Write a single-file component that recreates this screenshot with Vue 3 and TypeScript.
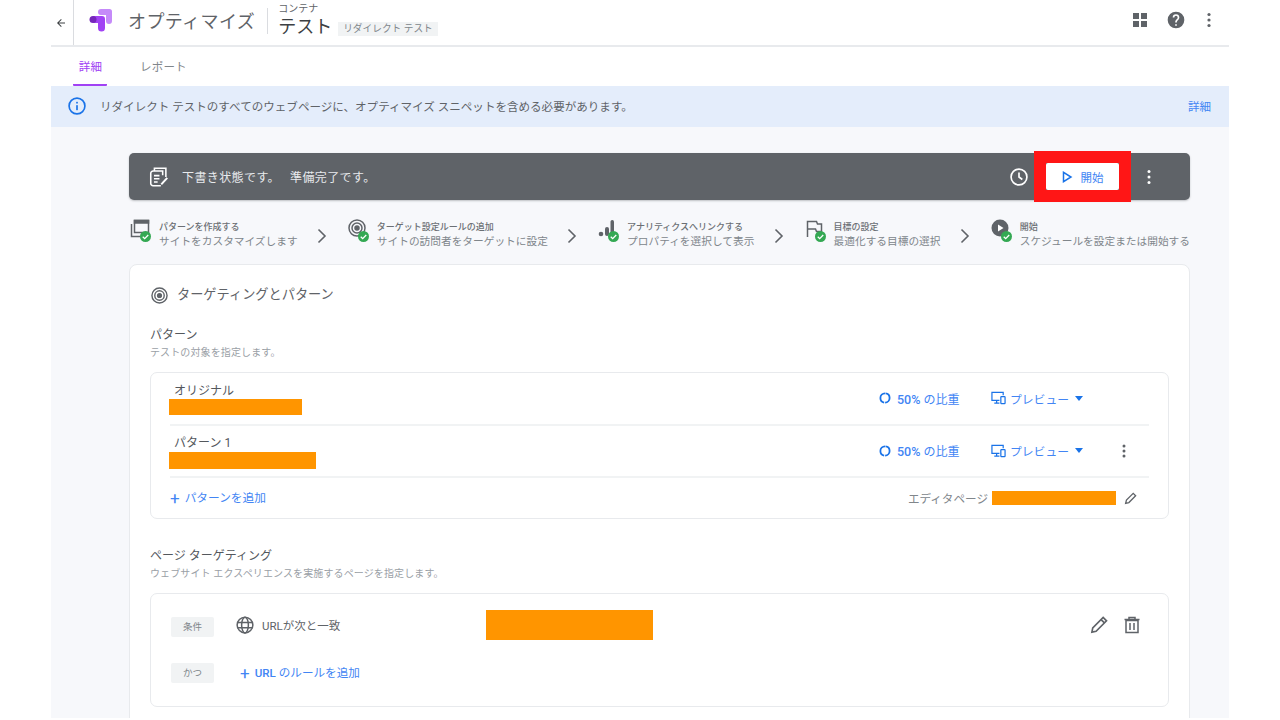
<script setup lang="ts">
interface Step { title: string; desc: string; kind: string }
const steps: Step[] = [
  { title: 'パターンを作成する', desc: 'サイトをカスタマイズします', kind: 'copy' },
  { title: 'ターゲット設定ルールの追加', desc: 'サイトの訪問者をターゲットに設定', kind: 'target' },
  { title: 'アナリティクスへリンクする', desc: 'プロパティを選択して表示', kind: 'bars' },
  { title: '目標の設定', desc: '最適化する目標の選択', kind: 'flag' },
  { title: '開始', desc: 'スケジュールを設定または開始する', kind: 'play' },
]
interface Variant { name: string; bar: number; more: boolean }
const variants: Variant[] = [
  { name: 'オリジナル', bar: 133, more: false },
  { name: 'パターン 1', bar: 147, more: true },
]
</script>

<template>
  <div class="page">
    <div class="frame">
      <header class="top">
        <div class="back">
          <svg width="12" height="12" viewBox="0 0 24 24"><path d="M20 11H7.800l5.600-5.600L12 4l-8 8 8 8 1.400-1.400L7.800 13H20z" fill="#3c4043" /></svg>
        </div>
        <svg class="logo" width="24" height="24" viewBox="0 0 24 24">
          <path d="M9 4A3 3 0 0 1 12 1h8.500A2.500 2.500 0 0 1 23 3.500V13a3 3 0 0 1-6 0V7h-5a3 3 0 0 1-3-3z" fill="#c58af9" />
          <path d="M4 8h9a3 3 0 0 1 3 3v9a3.500 3.500 0 0 1-7 0v-5H4z" fill="#a142f4" />
          <circle cx="4" cy="11.500" r="3.500" fill="#7627bb" />
        </svg>
        <span class="brand">オプティマイズ</span>
        <div class="crumb">
          <div class="crumb-sub">コンテナ</div>
          <div class="crumb-main">
            <span class="crumb-title">テスト</span>
            <span class="chip">リダイレクト テスト</span>
          </div>
        </div>
        <div class="top-actions">
          <svg width="18" height="18" viewBox="0 0 18 18" fill="#5f6368"><rect x="2" y="2" width="6" height="6" /><rect x="10" y="2" width="6" height="6" /><rect x="2" y="10" width="6" height="6" /><rect x="10" y="10" width="6" height="6" /></svg>
          <svg width="20" height="20" viewBox="0 0 24 24"><path d="M12 2a10 10 0 1 0 0 20 10 10 0 0 0 0-20zm1 17h-2v-2h2zm2.100-7.700-.9.900c-.7.700-1.200 1.300-1.200 2.800h-2v-.5c0-1.100.5-2.100 1.200-2.800l1.200-1.300c.4-.3.600-.8.600-1.400a2 2 0 0 0-4 0H8a4 4 0 0 1 8 0c0 .9-.4 1.700-.9 2.300z" fill="#5f6368" /></svg>
          <svg class="top-more" width="16" height="16" viewBox="0 0 16 16" fill="#5f6368"><circle cx="8" cy="2.500" r="1.600" /><circle cx="8" cy="8" r="1.600" /><circle cx="8" cy="13.500" r="1.600" /></svg>
        </div>
      </header>

      <nav class="tabs">
        <div class="tab active">詳細</div>
        <div class="tab">レポート</div>
      </nav>

      <div class="banner">
        <svg width="20" height="20" viewBox="0 0 24 24" fill="none"><circle cx="12" cy="12" r="9.500" stroke="#1a73e8" stroke-width="2" /><rect x="11" y="11" width="2" height="6" fill="#1a73e8" /><rect x="11" y="7" width="2" height="2" fill="#1a73e8" /></svg>
        <span class="banner-text">リダイレクト テストのすべてのウェブページに、オプティマイズ スニペットを含める必要があります。</span>
        <span class="banner-link">詳細</span>
      </div>

      <main class="content">
        <section class="status">
          <svg width="22" height="22" viewBox="0 0 24 24" fill="none" stroke="#fff" stroke-width="1.700"><path d="M7 5.500V2.500h12.500V12" /><path d="M5.500 5.500H16V10M5.500 5.500A2.500 2.500 0 0 0 3 8v11a2.500 2.500 0 0 0 2.500 2.500H14" /><path d="M6.500 10.500h6M6.500 14h6M6.500 17.500h4" /><path d="M14.500 20l6.500-7" stroke-width="2.200" /></svg>
          <span class="status-text">下書き状態です。</span>
          <span class="status-text second">準備完了です。</span>
          <div class="status-right">
            <svg width="20" height="20" viewBox="0 0 24 24" fill="none" stroke="#fff" stroke-width="2"><circle cx="12" cy="12" r="9.500" /><path d="M12 6.500V12l4 3" /></svg>
            <div class="start-wrap">
              <button class="start">
                <svg width="12" height="12" viewBox="0 0 12 12" fill="none" stroke="#1a73e8" stroke-width="1.500"><path d="M2.500 1.300v9.400L10 6z" /></svg>
                <span>開始</span>
              </button>
              <div class="highlight"></div>
            </div>
            <svg class="status-more" width="16" height="16" viewBox="0 0 16 16" fill="#fff"><circle cx="8" cy="2.500" r="1.500" /><circle cx="8" cy="8" r="1.500" /><circle cx="8" cy="13.500" r="1.500" /></svg>
          </div>
        </section>

        <section class="steps">
          <template v-for="(s, i) in steps" :key="s.title">
            <svg v-if="i > 0" class="chev" width="10" height="16" viewBox="0 0 10 16" fill="none" stroke="#5f6368" stroke-width="1.600"><path d="M1.500 1.500L8 8l-6.500 6.500" /></svg>
            <div class="step">
              <div class="step-icon">
                <svg width="20" height="20" viewBox="0 0 20 20" fill="none" stroke="#5f6368" stroke-width="1.500">
                  <g v-if="s.kind === 'copy'"><rect x="4.500" y="1.500" width="14" height="12" /><path d="M1.500 5v12.500H15" /><rect x="4.500" y="1.500" width="14" height="2.500" fill="#5f6368" /></g>
                  <g v-else-if="s.kind === 'target'"><circle cx="9" cy="9" r="8" /><circle cx="9" cy="9" r="5" /><circle cx="9" cy="9" r="2" fill="#5f6368" /></g>
                  <g v-else-if="s.kind === 'bars'" fill="#5f6368" stroke="none"><circle cx="3" cy="15" r="2.300" /><rect x="7" y="8" width="4" height="9" rx="2" /><rect x="12.500" y="1" width="3.500" height="16" rx="1.700" /></g>
                  <g v-else-if="s.kind === 'flag'"><path d="M2.500 18V2.500h9l1 2.500h4v7.500h-5l-1-2.500h-8" /></g>
                  <g v-else><circle cx="9" cy="9" r="8.500" fill="#5f6368" stroke="none" /><path d="M7 5.500v7l5.500-3.500z" fill="#fff" stroke="none" /></g>
                </svg>
                <svg class="check" width="11" height="11" viewBox="0 0 12 12"><circle cx="6" cy="6" r="6" fill="#34a853" /><path d="M3 6.200l2.100 2.100L9 4.300" fill="none" stroke="#fff" stroke-width="1.400" /></svg>
              </div>
              <div class="step-text">
                <div class="step-title">{{ s.title }}</div>
                <div class="step-desc">{{ s.desc }}</div>
              </div>
            </div>
          </template>
        </section>

        <section class="card">
          <div class="card-head">
            <svg width="17" height="17" viewBox="0 0 18 18" fill="none" stroke="#5f6368" stroke-width="1.500"><circle cx="9" cy="9" r="8" /><circle cx="9" cy="9" r="5" /><circle cx="9" cy="9" r="2" fill="#5f6368" /></svg>
            <span>ターゲティングとパターン</span>
          </div>

          <h3 class="sec-title first">パターン</h3>
          <p class="sec-sub">テストの対象を指定します。</p>

          <div class="box variants">
            <div v-for="v in variants" :key="v.name" class="variant">
              <div class="variant-info">
                <div class="variant-name">{{ v.name }}</div>
                <div class="redact" :style="{ width: v.bar + 'px' }"></div>
              </div>
              <div class="variant-weight">
                <svg width="12" height="12" viewBox="0 0 12 12" fill="none" stroke="#1a73e8" stroke-width="1.800"><circle cx="6" cy="6" r="4.600" stroke-dasharray="13.450 1" stroke-dashoffset="-.5" transform="rotate(-90 6 6)" /></svg>
                <span><span class="pct">50%</span> の比重</span>
              </div>
              <div class="variant-preview">
                <svg width="15" height="14" viewBox="0 0 16 14" fill="none" stroke="#1a73e8" stroke-width="1.300"><path d="M9 9.500H1V1h12v3" /><path d="M3.500 12.500h5.500M6 9.500v3" /><rect x="10.500" y="5.500" width="4.500" height="7.500" rx=".6" /></svg>
                <span>プレビュー</span>
                <i class="caret"></i>
              </div>
              <div class="variant-more">
                <svg v-if="v.more" width="14" height="14" viewBox="0 0 14 14" fill="#5f6368"><circle cx="7" cy="2" r="1.500" /><circle cx="7" cy="7" r="1.500" /><circle cx="7" cy="12" r="1.500" /></svg>
              </div>
            </div>
            <div class="variant-foot">
              <span class="add"><b class="plus">+</b><span>パターンを追加</span></span>
              <div class="editor">
                <span>エディタページ</span>
                <div class="redact editor-bar"></div>
                <svg width="13" height="13" viewBox="0 0 24 24" fill="none" stroke="#5f6368" stroke-width="2.400"><path d="M3 21l1.500-6L17 2.500 21.500 7 9 19.500z" /></svg>
              </div>
            </div>
          </div>

          <h3 class="sec-title second">ページ ターゲティング</h3>
          <p class="sec-sub">ウェブサイト エクスペリエンスを実施するページを指定します。</p>

          <div class="box rules">
            <div class="rule">
              <span class="tag">条件</span>
              <svg class="globe" width="18" height="18" viewBox="0 0 24 24" fill="none" stroke="#5f6368" stroke-width="2"><circle cx="12" cy="12" r="10.500" /><ellipse cx="12" cy="12" rx="4.500" ry="10.500" /><path d="M2 8.500h20M2 15.500h20" /></svg>
              <span class="rule-label">URLが次と一致</span>
              <div class="redact rule-bar"></div>
              <div class="rule-actions">
                <svg width="20" height="20" viewBox="0 0 24 24" fill="none" stroke="#5f6368" stroke-width="2"><path d="M3.500 20.500l1-5L17 3l4 4L8.500 19.500z" /><path d="M14.500 5.500l4 4" /></svg>
                <svg width="18" height="18" viewBox="0 0 18 18" fill="none" stroke="#5f6368" stroke-width="1.500"><path d="M3 4.500h12V16.500H3z" /><path d="M1.500 3.500h15M6 3.500V1.500h6v2M7 7v7M11 7v7" /></svg>
              </div>
            </div>
            <div class="rule and">
              <span class="tag">かつ</span>
              <span class="add strong"><b class="plus">+</b><span><strong>URL</strong> のルールを追加</span></span>
            </div>
          </div>
        </section>
      </main>
    </div>
  </div>
</template>

<style>
html, body { margin: 0; background: #fff; overflow: hidden; }
</style>

<style scoped>
.page {
  width: 1280px;
  height: 720px;
  overflow: hidden;
  background: #fff;
  font-family: "Roboto", "Noto Sans CJK JP", sans-serif;
  color: #3c4043;
}
.frame { width: 1178px; height: 718px; margin-left: 51px; overflow: hidden; display: flex; flex-direction: column; background: #fff; }
.top { height: 45px; flex: none; display: flex; align-items: center; border-bottom: 2px solid #e8eaed; }
.back { width: 19px; height: 45px; border-right: 1px solid #dadce0; display: flex; align-items: center; justify-content: center; padding-right: 3px; box-sizing: content-box; }
.logo { margin-left: 15px; margin-top: -6px; }
.brand { margin-left: 15px; margin-top: -6px; font-size: 18px; color: #5f6368; letter-spacing: .4px; }
.crumb { margin-left: 12px; padding-left: 10px; border-left: 1px solid #dadce0; height: 26px; display: flex; flex-direction: column; justify-content: center; margin-top: -3px; }
.crumb-sub { font-size: 10px; line-height: 12px; color: #5f6368; margin-top: -3px; position: relative; top: 2px; }
.crumb-main { display: flex; align-items: center; margin-top: 1px; position: relative; top: 1px; }
.crumb-title { font-size: 18px; line-height: 24px; color: #3c4043; }
.chip { margin-left: 6px; margin-top: 3px; padding: 0 5px; background: #f1f3f4; color: #80868b; font-size: 9.700px; line-height: 14px; }
.top-actions { margin-left: auto; margin-right: 12px; display: flex; align-items: center; gap: 17px; margin-top: -6px; }
.top-more { margin-left: -2px; }
.tabs { height: 39px; flex: none; display: flex; align-items: center; padding-left: 22px; gap: 36px; }
.tab { font-size: 11.500px; color: #80868b; height: 39px; line-height: 41px; position: relative; letter-spacing: .2px; }
.tab.active { color: #a142f4; width: 34px; text-align: center; text-indent: 1px; margin-right: -3px; border-bottom: 2px solid #a142f4; box-sizing: border-box; border-radius: 0 0 1px 1px; }
.banner { height: 41px; box-sizing: border-box; padding: 0 18px 1px 16px; flex: none; background: #e4edfb; display: flex; align-items: center; }
.banner-text { margin-left: 13px; font-size: 11.550px; color: #5f6368; }
.banner-link { margin-left: auto; font-size: 11.500px; color: #4285f4; }
.content { flex: 1; background: #f7f8fb; padding: 26px 39px 0 78px; min-height: 0; }
.status { height: 47px; background: #5f6368; border-radius: 5px; display: flex; align-items: center; padding: 0 33px 0 19px; color: #fff; box-shadow: 0 1px 2px rgba(60,64,67,.3); }
.status-text { margin-left: 12px; font-size: 12px; color: #e8eaed; letter-spacing: .4px; }
.status-text.second { margin-left: 10px; }
.status-right { margin-left: auto; display: flex; align-items: center; }
.start-wrap { position: relative; margin-left: 17px; }
.start { width: 73px; height: 27px; background: #fff; border: 0; border-radius: 2px; display: flex; align-items: center; justify-content: center; gap: 8px; color: #4285f4; font-size: 11.500px; font-family: inherit; padding: 0 1px 0 0; }
.highlight { position: absolute; left: -12px; top: -12px; width: 97px; height: 51px; border: 12px solid #ff1616; box-sizing: border-box; pointer-events: none; }
.status-more { margin-left: 22px; }
.steps { display: flex; align-items: center; justify-content: space-between; margin-top: 20px; height: 31px; }
.step { display: flex; align-items: flex-start; }
.step-icon { position: relative; width: 20px; height: 24px; margin-right: 9px; margin-top: -2px; margin-left: 1px; }
.check { position: absolute; left: 10px; top: 12px; }
.step-text { white-space: nowrap; }
.step-title { font-size: 9px; line-height: 12px; color: #6b6f74; font-weight: 500; }
.step-desc { font-size: 10.700px; line-height: 16px; color: #80868b; margin-top: 1px; }
.chev { flex: none; }
.card { margin-top: 13px; background: #fff; border: 1px solid #e8eaed; border-radius: 8px; padding: 0 20px; height: 520px; }
.card-head { display: flex; align-items: center; gap: 9px; padding: 21px 0 0 1px; height: 18px; font-size: 13.200px; color: #5f6368; }
.card-head span { line-height: 18px; }
.sec-title { margin: 0; font-size: 12px; font-weight: 400; line-height: 16px; color: #54585d; }
.sec-title.first { margin-top: 23px; }
.sec-title.second { margin-top: 29px; }
.sec-sub { margin: 4px 0 0; font-size: 10px; line-height: 12px; color: #9aa0a6; letter-spacing: .12px; }
.box { background: #fff; border: 1px solid #e8eaed; border-radius: 7px; box-sizing: border-box; }
.variants { margin-top: 13px; height: 147px; padding: 0 19px; }
.variant { height: 52.500px; box-sizing: border-box; border-bottom: 2px solid #f1f3f4; display: flex; align-items: center; }
.variant-info { width: 709px; }
.variant-name { font-size: 12px; line-height: 16px; margin: 2px 0 0 4px; color: #54585d; }
.redact { background: #ff9500; height: 16px; }
.variant-info .redact { margin-left: -1px; }
.variant:nth-child(2) .variant-info .redact { margin-top: 1px; height: 17px; }
.variant-weight { width: 111px; display: flex; align-items: center; gap: 6px; color: #4285f4; font-size: 12px; }
.pct { font-weight: 500; font-size: 12.500px; }
.variant-preview { width: 126px; display: flex; align-items: center; gap: 4px; margin-left: 1px; color: #4285f4; font-size: 11.800px; }
.caret { width: 0; height: 0; border: 4px solid transparent; border-top: 5px solid #1a73e8; border-bottom: 0; margin-left: 2px; }
.variant-more { width: 14px; display: flex; }
.variant-foot { height: 40px; display: flex; align-items: center; justify-content: space-between; }
.add { display: flex; align-items: center; gap: 5px; color: #4285f4; font-size: 11.700px; line-height: 16px; }
.variant-foot .add { margin-top: -1px; }
.plus { font-weight: 400; font-size: 17px; line-height: 16px; }
.add.strong strong { font-weight: 500; }
.editor { display: flex; align-items: center; font-size: 11.600px; color: #80868b; margin-right: 12px; }
.editor-bar { width: 124px; height: 14px; margin-left: 4px; margin-right: 8px; }
.rules { margin-top: 13px; height: 114px; padding: 0 20px; }
.rule { display: flex; align-items: center; }
.rule:first-child { height: 30px; margin-top: 16px; }
.rule:first-child .tag { margin-top: 4px; }
.rule.and { margin-top: 23px; height: 20px; }
.tag { width: 43px; height: 20px; line-height: 20px; text-align: center; background: #f1f3f4; border-radius: 2px; font-size: 9.500px; color: #80868b; flex: none; }
.globe { margin-left: 22px; }
.rule-label { margin-left: 8px; font-size: 11.500px; color: #5f6368; width: 224px; }
.rule-bar { width: 167px; height: 30px; }
.rule-actions { margin-left: auto; display: flex; align-items: center; gap: 14px; margin-right: 7px; }
.add.strong { margin-left: 26px; font-size: 11.600px; }
</style>
